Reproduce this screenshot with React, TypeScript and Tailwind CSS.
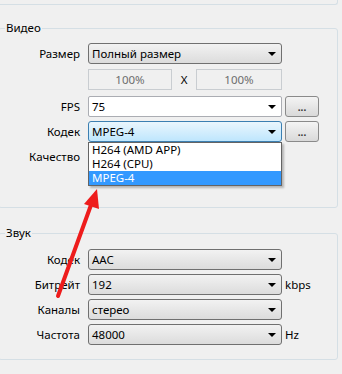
import React from "react";

const font = { fontFamily: '"Noto Sans", "Open Sans", sans-serif' };

const Arrow = () => (
  <span className="ml-auto mr-[5px] h-0 w-0 border-x-[4px] border-t-[4px] border-x-transparent border-t-black" />
);

const Combo = ({ value, kind = "plain" }: { value: string; kind?: "plain" | "edit" | "focus" }) => {
  const look =
    kind === "edit"
      ? "bg-white border-[#abadb3] rounded-[2px]"
      : kind === "focus"
      ? "bg-gradient-to-b from-[#eaf6fd] to-[#bee6fd] border-[#3c7fb1] rounded-[3px]"
      : "bg-gradient-to-b from-[#f2f2f2] to-[#dcdcdc] border-[#707070] rounded-[3px]";
  return (
    <div className={`flex h-[21px] w-[194px] items-center border pl-[3px] text-black ${look}`}>
      <span className="leading-none">{value}</span>
      <Arrow />
    </div>
  );
};

const DotsButton = () => (
  <div className="ml-[3px] flex h-[21px] w-[34px] items-center justify-center rounded-[3px] border border-[#8a8a8a] bg-gradient-to-b from-[#f4f4f4] to-[#d9d9d9] text-[10px] font-bold leading-none text-[#333]">
    ...
  </div>
);

const Row = ({ label, children, className = "" }: { label: string; children?: React.ReactNode; className?: string }) => (
  <div className={`flex items-center ${className}`}>
    <div className="w-[80px] pr-px text-right leading-none">{label}</div>
    <div className="ml-[7px] flex items-center">{children}</div>
  </div>
);

export default function App() {
  return (
    <div className="relative h-[374px] w-[342px] overflow-hidden bg-[#f0f0f0] text-[11.5px] text-black" style={font}>
      {/* previous group bottom */}
      <div className="h-[5px] w-[338px] rounded-br-[3px] border-b border-r border-[#d5dfe5]" />

      {/* Видео */}
      <div className="relative ml-[-2px] mt-[23px] h-[180px] w-[340px] rounded-[3px] border border-[#d5dfe5] pt-[14px]">
        <div className="absolute left-[6px] top-[-9px] bg-[#f0f0f0] px-px leading-[16px]">Видео</div>
        <div className="ml-[2px]">
          <Row label="Размер">
            <Combo value="Полный размер" />
          </Row>
          <Row label="" className="mt-[5px]">
            <div className="flex h-[21px] w-[84px] items-center justify-center border border-[#c9cdd1] text-[#6d6d6d] leading-none">
              100%
            </div>
            <div className="w-[24px] text-center leading-none">X</div>
            <div className="flex h-[21px] w-[86px] items-center justify-center border border-[#c9cdd1] text-[#6d6d6d] leading-none">
              100%
            </div>
          </Row>
          <Row label="FPS" className="mt-[6px]">
            <Combo value="75" kind="edit" />
            <DotsButton />
          </Row>
          <Row label="Кодек" className="mt-[4px]">
            <Combo value="MPEG-4" kind="focus" />
            <DotsButton />
          </Row>
          <Row label="Качество" className="mt-[4px] h-[21px]" />
        </div>
        {/* open list */}
        <div className="absolute left-[89px] top-[113px] w-[194px] border border-[#646464] bg-white shadow-[2px_2px_2px_rgba(0,0,0,0.25)]">
          <div className="h-[14px] pl-[3px] leading-[14px]">H264 (AMD APP)</div>
          <div className="h-[14px] pl-[3px] leading-[14px]">H264 (CPU)</div>
          <div className="h-[14px] bg-[#3399ff] pl-[3px] leading-[14px] text-white">MPEG-4</div>
        </div>
      </div>

      {/* Звук */}
      <div className="relative ml-[-2px] mt-[25px] h-[127px] w-[340px] rounded-[3px] border border-[#d5dfe5] pt-[15px]">
        <div className="absolute left-[6px] top-[-9px] bg-[#f0f0f0] px-px leading-[16px]">Звук</div>
        <div className="ml-[2px] flex flex-col gap-[4px]">
          <Row label="Кодек">
            <Combo value="AAC" />
          </Row>
          <Row label="Битрейт">
            <Combo value="192" />
            <span className="ml-[3px] leading-none">kbps</span>
          </Row>
          <Row label="Каналы">
            <Combo value="стерео" />
          </Row>
          <Row label="Частота">
            <Combo value="48000" />
            <span className="ml-[3px] leading-none">Hz</span>
          </Row>
        </div>
      </div>

      {/* red arrow */}
      <svg className="pointer-events-none absolute left-0 top-0" width="342" height="374">
        <line x1="58" y1="296" x2="91" y2="205" stroke="#ee1c1c" strokeWidth="4" strokeLinecap="round" />
        <polygon points="97,189 84,204 99,209" fill="#ee1c1c" />
      </svg>
    </div>
  );
}
